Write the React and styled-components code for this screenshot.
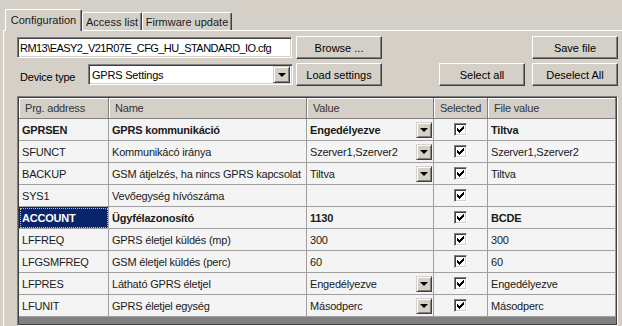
import React from 'react'
import styled, { createGlobalStyle } from 'styled-components'

const GlobalStyle = createGlobalStyle`
  body {
    margin: 0;
    background: #d4d0c8;
    font-family: "Liberation Sans", Arial, sans-serif;
    font-size: 11px;
    letter-spacing: -0.2px;
    color: #1a1a1a;
  }
`

const Window = styled.div`
  width: 622px;
  height: 326px;
  overflow: hidden;
  display: flex;
  flex-direction: column;
  background: #d4d0c8;
`

const TabStrip = styled.div`
  display: flex;
  align-items: flex-end;
  height: 30px;
  padding-left: 5px;
  flex-shrink: 0;
`

const Tab = styled.div`
  position: relative;
  z-index: ${p => (p.$active ? 2 : 1)};
  width: ${p => p.$w}px;
  height: ${p => (p.$active ? 22 : 18)}px;
  margin-bottom: ${p => (p.$active ? -1 : 0)}px;
  box-sizing: border-box;
  display: flex;
  align-items: center;
  justify-content: center;
  letter-spacing: 0;
  background: #d4d0c8;
  border-top: 1px solid #fff;
  border-left: 1px solid #fff;
  border-right: 1px solid #404040;
  box-shadow: inset -1px 0 0 #808080;
  border-radius: 2px 2px 0 0;
  padding-bottom: ${p => (p.$active ? 2 : 0)}px;
`

const Pane = styled.div`
  flex: 1;
  margin-left: 3px;
  border-top: 1px solid #fff;
  border-left: 1px solid #fff;
  padding: 5px 4px 0 13px;
  display: flex;
  flex-direction: column;
`

const Row = styled.div`
  display: flex;
  align-items: center;
  height: 23px;
  margin-bottom: ${p => p.$gap || 0}px;
`

const Spacer = styled.div`
  flex: 1;
`

const Sunken = styled.div`
  box-sizing: border-box;
  background: #fff;
  border: 1px solid;
  border-color: #808080 #fff #fff #808080;
  box-shadow: inset 1px 1px 0 #404040, inset -1px -1px 0 #d4d0c8;
  display: flex;
  align-items: center;
  white-space: nowrap;
  overflow: hidden;
`

const TextBox = styled(Sunken)`
  width: 275px;
  height: 21px;
  padding-left: 2px;
  letter-spacing: -0.55px;
  color: #000;
`

const Select = styled(Sunken)`
  width: 205px;
  height: 21px;
  padding: 0 2px 0 3px;
  justify-content: space-between;
  color: #000;
`

const Label = styled.div`
  width: 68px;
  padding-left: 3px;
  padding-top: 4px;
  color: #000;
`

const Button = styled.button`
  width: 86px;
  height: 23px;
  box-sizing: border-box;
  margin-left: ${p => p.$ml || 0}px;
  padding: 0;
  font: 11px "Liberation Sans", Arial, sans-serif;
  color: #000;
  background: #d4d0c8;
  border: 1px solid;
  border-color: #fff #404040 #404040 #fff;
  box-shadow: inset -1px -1px 0 #808080;
`

const ComboButton = styled.div`
  width: ${p => p.$w || 16}px;
  height: ${p => p.$h || 16}px;
  box-sizing: border-box;
  flex-shrink: 0;
  display: flex;
  align-items: center;
  justify-content: center;
  background: #d4d0c8;
  border: 1px solid;
  border-color: #d4d0c8 #404040 #404040 #d4d0c8;
  box-shadow: inset 1px 1px 0 #fff, inset -1px -1px 0 #808080;
  &::after {
    content: '';
    border-left: 4px solid transparent;
    border-right: 4px solid transparent;
    border-top: 4px solid #000;
    margin-top: 1px;
  }
`

const Grid = styled.div`
  flex: 1;
  margin-top: 10px;
  box-sizing: border-box;
  background: #808080;
  border: 1px solid;
  border-color: #808080 #fff #fff #808080;
  box-shadow: inset 1px 1px 0 #404040, inset -1px -1px 0 #404040;
  padding: 1px;
`

const GridRow = styled.div`
  display: grid;
  grid-template-columns: 90px 198px 127px 54px 128px;
  height: ${p => (p.$header ? 21 : 22)}px;
`

const HeadCell = styled.div`
  box-sizing: border-box;
  display: flex;
  align-items: center;
  justify-content: ${p => (p.$center ? 'center' : 'flex-start')};
  padding-left: ${p => (p.$center ? 0 : 6)}px;
  background: #d4d0c8;
  color: #333;
  border-right: 1px solid #808080;
  border-bottom: 1px solid #808080;
  box-shadow: inset 1px 1px 0 #fff;
  white-space: nowrap;
`

const Cell = styled.div`
  box-sizing: border-box;
  display: flex;
  align-items: center;
  justify-content: ${p => (p.$center ? 'center' : 'space-between')};
  padding: 0 1px 0 ${p => (p.$center ? 0 : 3)}px;
  background: ${p => (p.$current ? '#0a246a' : '#f4f4f4')};
  color: ${p => (p.$current ? '#fff' : '#1a1a1a')};
  font-weight: ${p => (p.$bold ? 'bold' : 'normal')};
  border-right: 1px solid #a0a0a0;
  border-bottom: 1px solid #a0a0a0;
  outline: ${p => (p.$current ? '1px dotted #f0c060' : 'none')};
  outline-offset: -2px;
  white-space: nowrap;
  overflow: hidden;
`

const Check = styled.div`
  width: 13px;
  height: 13px;
  box-sizing: border-box;
  background: #fff;
  border: 1px solid;
  border-color: #808080 #fff #fff #808080;
  box-shadow: inset 1px 1px 0 #404040, inset -1px -1px 0 #d4d0c8;
  display: flex;
  align-items: center;
  justify-content: center;
`

const CheckMark = () => (
  <svg width="7" height="7" viewBox="0 0 7 7" shapeRendering="crispEdges">
    <path
      d="M6 0h1v3h-1v1h-1v1h-1v1h-1v1h-1v-1h-1v-1h-1v-3h1v1h1v1h1v-1h1v-1h1z"
      fill="#000"
    />
  </svg>
)

const rows = [
  { addr: 'GPRSEN', name: 'GPRS kommunikáció', value: 'Engedélyezve', combo: true, file: 'Tiltva', bold: true },
  { addr: 'SFUNCT', name: 'Kommunikácó iránya', value: 'Szerver1,Szerver2', combo: true, file: 'Szerver1,Szerver2' },
  { addr: 'BACKUP', name: 'GSM átjelzés, ha nincs GPRS kapcsolat', value: 'Tiltva', combo: true, file: 'Tiltva' },
  { addr: 'SYS1', name: 'Vevőegység hívószáma', value: '', file: '' },
  { addr: 'ACCOUNT', name: 'Ügyfélazonosító', value: '1130', file: 'BCDE', bold: true, current: true },
  { addr: 'LFFREQ', name: 'GPRS életjel küldés (mp)', value: '300', file: '300' },
  { addr: 'LFGSMFREQ', name: 'GSM életjel küldés (perc)', value: '60', file: '60' },
  { addr: 'LFPRES', name: 'Látható GPRS életjel', value: 'Engedélyezve', combo: true, file: 'Engedélyezve' },
  { addr: 'LFUNIT', name: 'GPRS életjel egység', value: 'Másodperc', combo: true, file: 'Másodperc' },
]

const App = () => {
  return (
    <Window>
      <GlobalStyle />
      <TabStrip>
        <Tab $active $w={77}>Configuration</Tab>
        <Tab $w={60}>Access list</Tab>
        <Tab $w={90}>Firmware update</Tab>
      </TabStrip>
      <Pane>
        <Row $gap={4}>
          <TextBox>RM13\EASY2_V21R07E_CFG_HU_STANDARD_IO.cfg</TextBox>
          <Button $ml={4}>Browse ...</Button>
          <Spacer />
          <Button>Save file</Button>
        </Row>
        <Row>
          <Label>Device type</Label>
          <Select>
            GPRS Settings
            <ComboButton $w={17} $h={17} />
          </Select>
          <Button $ml={3}>Load settings</Button>
          <Spacer />
          <Button>Select all</Button>
          <Button $ml={7}>Deselect All</Button>
        </Row>
        <Grid>
          <GridRow $header>
            <HeadCell>Prg. address</HeadCell>
            <HeadCell>Name</HeadCell>
            <HeadCell>Value</HeadCell>
            <HeadCell $center>Selected</HeadCell>
            <HeadCell>File value</HeadCell>
          </GridRow>
          {rows.map(r => (
            <GridRow key={r.addr}>
              <Cell $bold={r.bold} $current={r.current}>{r.addr}</Cell>
              <Cell $bold={r.bold}>{r.name}</Cell>
              <Cell $bold={r.bold}>
                {r.value}
                {r.combo && <ComboButton />}
              </Cell>
              <Cell $center>
                <Check><CheckMark /></Check>
              </Cell>
              <Cell $bold={r.bold}>{r.file}</Cell>
            </GridRow>
          ))}
        </Grid>
      </Pane>
    </Window>
  )
}

export default App
